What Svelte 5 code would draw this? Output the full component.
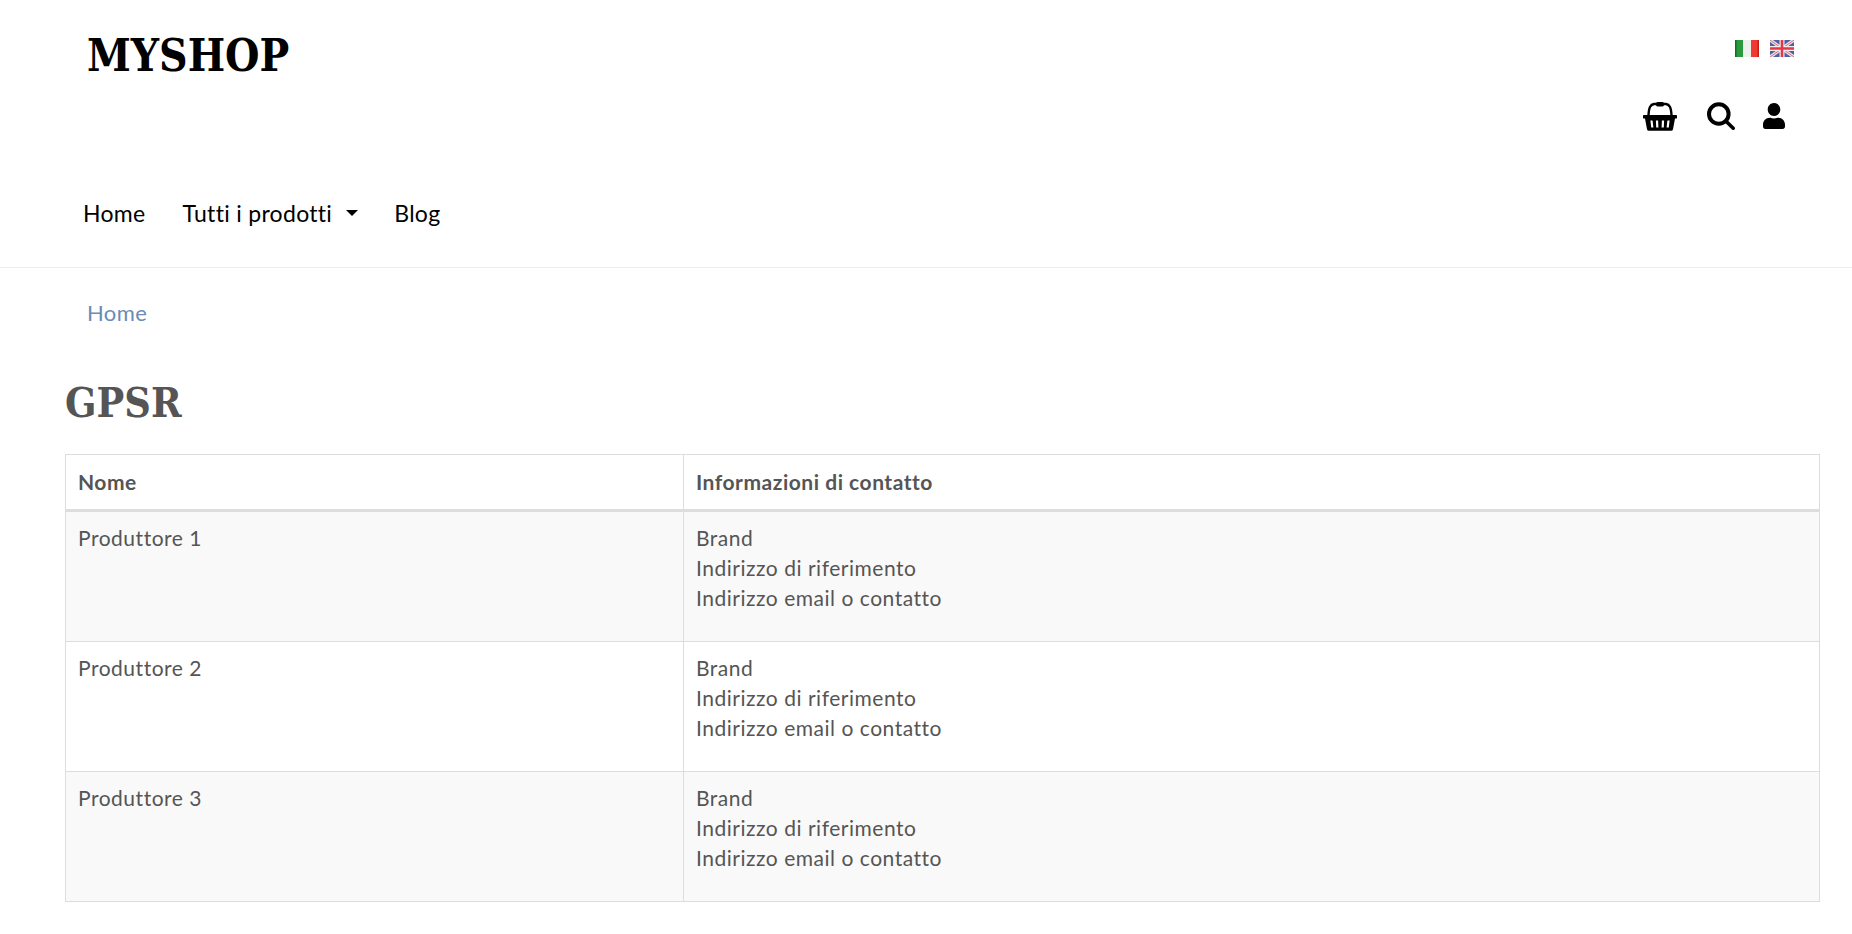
<script>
  const rows = ['Produttore 1', 'Produttore 2', 'Produttore 3'];
</script>

<header class="site">
  <div class="top">
    <div class="logo">MYSHOP</div>
    <div class="tools">
      <div class="flags">
        <svg class="flag" viewBox="0 0 24 17" width="24" height="17" role="img" aria-label="Italiano">
          <rect width="8" height="17" fill="#2a9a40" />
          <rect x="8" width="8" height="17" fill="#f0f0ea" />
          <rect x="16" width="8" height="17" fill="#ee3a30" />
          <rect width="1.5" height="17" fill="#0d6e22" />
          <rect x="22.5" width="1.5" height="17" fill="#c81c18" />
        </svg>
        <svg class="flag" viewBox="0 0 24 17" width="24" height="17" role="img" aria-label="English">
          <rect width="24" height="17" fill="#4f5fa6" />
          <path d="M0 0L24 17M24 0L0 17" stroke="#e9e0e6" stroke-width="3.4" />
          <path d="M0 0L24 17M24 0L0 17" stroke="#d8707c" stroke-width="1" />
          <path d="M12 0V17M0 8.5H24" stroke="#f4eef0" stroke-width="5" />
          <path d="M12 0V17M0 8.5H24" stroke="#e2384a" stroke-width="2.6" />
        </svg>
      </div>
      <div class="icons">
        <svg viewBox="0 0 34 30" width="34" height="30" aria-label="Carrello" role="img">
          <path d="M5.5 14 C6 6 7.5 3.5 11 3 H23 C26.5 3.5 28 6 28.5 14" fill="none" stroke="#000" stroke-width="2.4" />
          <rect x="13" y="1" width="8" height="4.4" rx="1.6" fill="#000" />
          <path d="M1.2 14 H32.8 a1.2 1.2 0 0 1 0 3.6 H32 L30 28.2 a2 2 0 0 1 -2 1.6 H6 a2 2 0 0 1 -2 -1.6 L2 17.6 H1.2 a1.2 1.2 0 0 1 0 -3.6Z" fill="#000" />
          <path d="M8.5 19.5L9.3 26.5M14 19.5L14.3 26.5M20 19.5L19.7 26.5M25.5 19.5L24.7 26.5" stroke="#fff" stroke-width="2.2" />
        </svg>
        <svg viewBox="0 0 28 28" width="28" height="28" aria-label="Cerca" role="img">
          <circle cx="11.8" cy="12" r="9.8" fill="none" stroke="#000" stroke-width="4" />
          <path d="M18.8 19L26.2 26.2" stroke="#000" stroke-width="3.6" stroke-linecap="round" />
        </svg>
        <svg class="user" viewBox="0 0 448 512" width="22" height="26" preserveAspectRatio="none" aria-label="Account" role="img">
          <path d="M224 256c70.7 0 128-57.3 128-128S294.7 0 224 0 96 57.3 96 128s57.3 128 128 128zm89.6 32h-16.7c-22.2 10.2-46.9 16-72.9 16s-50.6-5.8-72.9-16h-16.7C60.2 288 0 348.2 0 422.4V464c0 26.5 21.5 48 48 48h352c26.5 0 48-21.5 48-48v-41.6c0-74.2-60.2-134.4-134.4-134.4z" fill="#000" />
        </svg>
      </div>
    </div>
  </div>
  <nav>
    <a href="#home">Home</a>
    <a href="#prodotti">Tutti i prodotti<span class="caret"></span></a>
    <a href="#blog">Blog</a>
  </nav>
</header>

<div class="crumb"><a href="#home">Home</a></div>

<main>
  <h1>GPSR</h1>
  <table>
    <thead>
      <tr><th class="c1">Nome</th><th>Informazioni di contatto</th></tr>
    </thead>
    <tbody>
      {#each rows as r}
        <tr>
          <td>{r}</td>
          <td>Brand<br />Indirizzo di riferimento<br />Indirizzo email o contatto</td>
        </tr>
      {/each}
    </tbody>
  </table>
</main>

<style>
  :global(body) {
    margin: 0;
    background: #fff;
    font-family: "Lato", "Open Sans", sans-serif;
    color: #555;
  }
  .site {
    height: 267px;
    border-bottom: 1px solid #eee;
    display: flex;
    flex-direction: column;
  }
  .top {
    display: flex;
    justify-content: space-between;
    padding: 0 58px 0 87px;
    height: 190px;
  }
  .logo {
    font-family: "DejaVu Serif Condensed", "DejaVu Serif", serif;
    font-stretch: condensed;
    font-weight: 700;
    font-size: 44px;
    line-height: 54px;
    margin-top: 29px;
    color: #000;
  }
  .tools {
    display: flex;
    flex-direction: column;
    align-items: flex-end;
    padding-top: 40px;
  }
  .flags {
    display: flex;
    gap: 11px;
  }
  .flag {
    filter: blur(0.5px);
    display: block;
  }
  .icons {
    display: flex;
    align-items: center;
    gap: 30px;
    margin-top: 44px;
    margin-right: 9px;
  }
  .icons svg {
    display: block;
  }
  .icons .user {
    margin-left: -2px;
  }
  nav {
    display: flex;
    gap: 37px;
    padding-left: 83px;
    font-size: 23px;
    letter-spacing: 0.3px;
    line-height: 30px;
    margin-top: 8px;
  }
  nav a {
    color: #000;
    text-decoration: none;
    display: flex;
    align-items: center;
  }
  .caret {
    width: 0;
    height: 0;
    border-left: 6px solid transparent;
    border-right: 6px solid transparent;
    border-top: 6px solid #000;
    margin-left: 14px;
    margin-right: -1px;
  }
  .crumb {
    padding: 30px 0 0 87px;
    font-size: 22px;
    letter-spacing: 0.4px;
    line-height: 30px;
  }
  .crumb a {
    color: #6a8bb5;
    text-decoration: none;
  }
  main {
    padding: 0 32px 32px 65px;
  }
  h1 {
    font-family: "DejaVu Serif Condensed", "DejaVu Serif", serif;
    font-stretch: condensed;
    font-weight: 700;
    font-size: 41px;
    line-height: 52px;
    margin: 49px 0 25px;
    color: #555;
  }
  table {
    width: 100%;
    border-collapse: collapse;
    font-size: 21px;
    letter-spacing: 0.52px;
    line-height: 30px;
  }
  th, td {
    border: 1px solid #ddd;
    padding: 12px;
    text-align: left;
    vertical-align: top;
  }
  th {
    font-weight: 700;
    border-bottom: 3px solid #ddd;
    padding-top: 12px;
    padding-bottom: 12px;
  }
  .c1 {
    width: 593px;
  }
  td {
    padding-bottom: 28px;
    padding-top: 11px;
  }
  tbody tr:nth-child(odd) td {
    background: #f9f9f9;
  }
</style>
